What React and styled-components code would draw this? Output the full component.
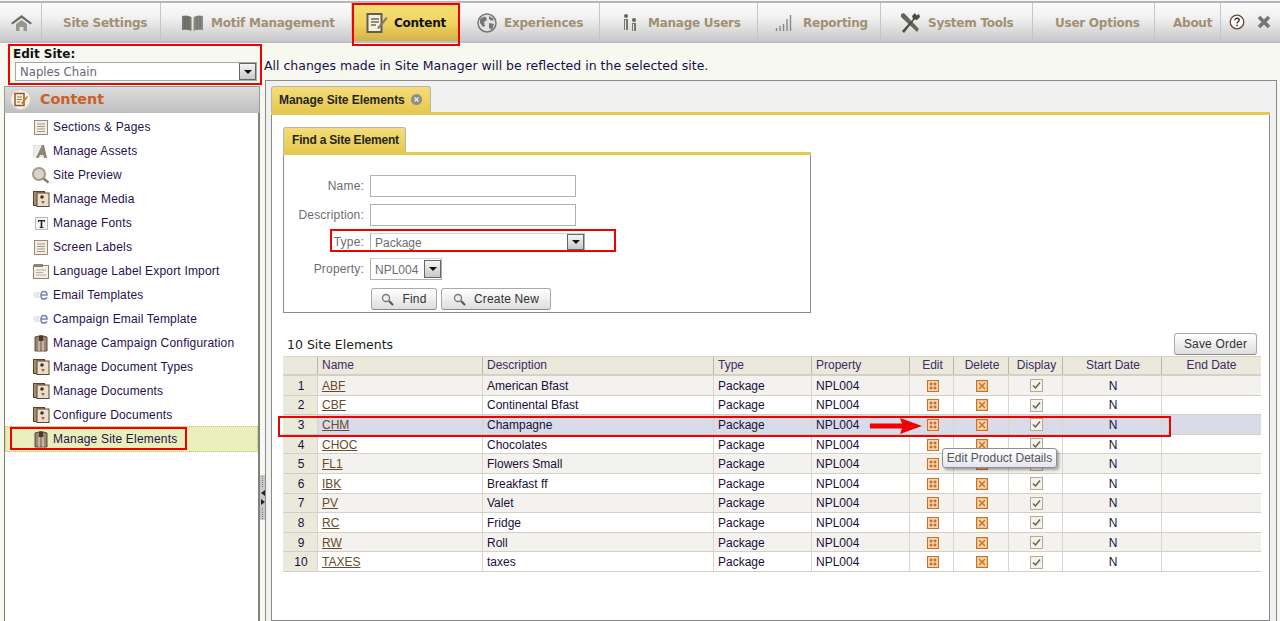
import React from 'react'
import styled, { createGlobalStyle } from 'styled-components'

const GlobalStyle = createGlobalStyle`
  html, body { margin: 0; padding: 0; background: #f7f8f0; }
  body { font-family: "Liberation Sans", Arial, sans-serif; overflow: hidden; }
  * { box-sizing: border-box; }
`

const Page = styled.div`
  position: relative;
  width: 1280px;
  height: 621px;
  overflow: hidden;
  background: #f7f8f0;
  padding-top: 1px;
`

/* ---------- top navigation ---------- */

const NavBar = styled.div`
  display: flex;
  height: 42px;
  border-top: 2px solid #b5b5bb;
  border-bottom: 2px solid #bdbdc9;
  background: linear-gradient(#fbfbfb 0%, #f0f0f0 40%, #c9c9c9 100%);
`
const NavItem = styled.div`
  display: flex;
  align-items: center;
  gap: ${p => p.$gap || 0}px;
  width: ${p => p.$w}px;
  flex: none;
  padding-left: ${p => p.$pad || 0}px;
  padding-top: 1px;
  border-right: ${p => p.$active ? 'none' : '1px solid #c4c4d2'};
  font: bold 12px "DejaVu Sans", Verdana, sans-serif;
  letter-spacing: -0.25px;
  color: ${p => p.$active ? '#111' : '#a09074'};
  background: ${p => p.$active ? 'linear-gradient(#f8e078 0%, #f0d25e 55%, #d2b247 100%)' : 'none'};
`
const NavTools = styled.div`
  display: flex;
  align-items: center;
  gap: 12px;
  padding-left: 8px;
  flex: 1;
`

/* ---------- body layout ---------- */

const Body = styled.div`
  display: flex;
  height: 578px;
`
const Side = styled.div`
  width: 260px;
  flex: none;
  padding: 3px 0 0 4px;
  display: flex;
  flex-direction: column;
`
const SiteLabel = styled.div`
  font: bold 12px "DejaVu Sans", Verdana, sans-serif;
  color: #111;
  padding-left: 9px;
  height: 16px;
  line-height: 16px;
`
const SiteSelect = styled.div`
  display: flex;
  align-items: center;
  justify-content: space-between;
  width: 242px;
  height: 19px;
  margin: 0 0 5px 11px;
  padding: 0 0 0 4px;
  border: 1px solid #a8a8a8;
  background: #fff;
  font: 11.7px "DejaVu Sans", Verdana, sans-serif;
  color: #666677;
`
const SideHead = styled.div`
  display: flex;
  align-items: center;
  gap: 9px;
  height: 27px;
  padding: 0 0 2px 5px;
  border: 1px solid #9a9a9a;
  border-bottom: none;
  background: linear-gradient(#dcdcdc, #bfbfbf);
  font: bold 14.3px "DejaVu Sans", Verdana, sans-serif;
  color: #c8602a;
`
const SideList = styled.div`
  flex: 1;
  border: 1px solid #808080;
  border-width: 0 2px 0 1px;
  background: #fff;
  padding-top: 2px;
`
const SideRow = styled.div`
  display: flex;
  align-items: center;
  height: ${p => p.$active ? 26 : 24}px;
  margin-top: ${p => p.$active ? -1 : 0}px;
  padding-left: 27px;
  gap: 3px;
  font-size: 12px;
  letter-spacing: 0.18px;
  color: #27104e;
  ${p => p.$active && `
    background: #e9efbb;
    outline: 1px dotted #cfc25a;
    outline-offset: -1px;
  `}
`
const IconSlot = styled.span`
  width: 18px;
  height: 18px;
  flex: none;
  display: flex;
  align-items: center;
  justify-content: center;
`
const Splitter = styled.div`
  width: 5px;
  flex: none;
  display: flex;
  flex-direction: column;
  justify-content: flex-end;
  padding-bottom: 101px;
`
const Grip = styled.div`
  height: 45px;
  background: #c9c9c9;
  display: flex;
  flex-direction: column;
  align-items: center;
  justify-content: center;
  gap: 3px;
`
const GripDots = styled.div`
  height: 11px;
  border-left: 1px dotted #808080;
`
const GripArrow = styled.div`
  width: 0;
  height: 0;
  border: 3px solid transparent;
  border-left: ${p => p.$right ? '4px solid #222' : 'none'};
  border-right: ${p => p.$right ? 'none' : '4px solid #222'};
`

/* ---------- right side ---------- */

const Main = styled.div`
  flex: 1;
  display: flex;
  flex-direction: column;
  min-width: 0;
  padding-right: 3px;
`
const Notice = styled.div`
  height: 37px;
  padding: 14px 0 0 0;
  font: 12.5px/17px "DejaVu Sans", Verdana, sans-serif;
  color: #1a0f45;
  margin-left: -1px;
`
const Shell = styled.div`
  flex: 1;
  display: flex;
  flex-direction: column;
  padding: 5px 6px 0 5px;
  background: #f1f1f1;
  border: 1px solid #8a8a8a;
  border-bottom: none;
`
const TabRow = styled.div`
  display: flex;
  border-bottom: 3px solid #e6c94f;
`
const Tab = styled.div`
  display: flex;
  align-items: center;
  gap: 6px;
  height: ${p => p.$h}px;
  padding: 0 ${p => p.$tight ? 6 : 8}px 0 ${p => p.$tight ? 8 : 7}px;
  border: 1px solid #b5b5b5;
  border-bottom: none;
  border-radius: 3px 3px 0 0;
  background: linear-gradient(#f3dd7a, #e6c94f);
  font: bold 12px "Liberation Sans", Arial, sans-serif;
  letter-spacing: ${p => p.$tight ? -0.2 : -0.05}px;
  color: #26261a;
`
const Panel = styled.div`
  flex: 1;
  background: #fff;
  border: 1px solid #8a8a8a;
  border-top: none;
  padding: 12px 0 0 11px;
`
const FindWrap = styled.div`
  width: 528px;
`
const FindBox = styled.div`
  display: flex;
  flex-direction: column;
  gap: 7px;
  height: 158px;
  border: 1px solid #8a8a8a;
  border-top: none;
  padding-top: 20px;
`
const FormRow = styled.div`
  display: grid;
  grid-template-columns: 80px 1fr;
  column-gap: 6px;
  align-items: center;
  height: ${p => p.$h || 22}px;
`
const FormLabel = styled.div`
  text-align: right;
  font-size: 12px;
  letter-spacing: 0.18px;
  color: #6d6d74;
`
const TextInput = styled.div`
  width: 206px;
  height: 22px;
  border: 1px solid #b0b0b0;
  background: #fff;
`
const SelectBox = styled.div`
  display: flex;
  align-items: center;
  justify-content: space-between;
  width: ${p => p.$w}px;
  height: ${p => p.$h || 22}px;
  padding-left: 4px;
  border: 1px solid #b0b0b0;
  border-top-color: #d4d4d4;
  background: #fff;
  font-size: 12px;
  color: #6d6d74;
`
const SelectText = styled.span`
  padding-top: 1px;
`
const Arrow = styled.span`
  width: 17px;
  height: ${p => p.$h || 18}px;
  flex: none;
  border: 1px solid #666;
  background: linear-gradient(#f5f5f5, #c8c8c8);
  display: flex;
  align-items: center;
  justify-content: center;
  &::after {
    content: '';
    border: 4px solid transparent;
    border-top: 4px solid #111;
    border-bottom: none;
  }
`
const FormButtons = styled.div`
  display: flex;
  gap: 4px;
  margin: 1px 0 0 87px;
`
const Button = styled.div`
  display: flex;
  align-items: center;
  justify-content: center;
  gap: ${p => p.$gap || 0}px;
  width: ${p => p.$w}px;
  height: 22px;
  border: 1px solid #a9a9a9;
  border-bottom-color: #8b8b8b;
  border-radius: 3px;
  background: linear-gradient(#ffffff, #dedede);
  font-size: 12px;
  letter-spacing: 0.18px;
  color: #333;
`
const ListHead = styled.div`
  display: flex;
  align-items: flex-end;
  justify-content: space-between;
  width: 978px;
  height: 42px;
  padding: 0 4px;
`
const ListTitle = styled.div`
  font: 12.5px/18px "DejaVu Sans", Verdana, sans-serif;
  color: #222;
  margin-bottom: 1px;
`
const GridRow = styled.div`
  display: grid;
  grid-template-columns: 35px 165px 231px 98px 98px 44px 55px 54px 99px 99px;
  height: ${p => p.$h || 19.6}px;
  width: 978px;
  font-size: 12px;
  border-bottom: 1px solid #d3d0c8;
  background: ${p => p.$selected ? '#d9dce8' : p.$odd ? '#f3f2ee' : '#fff'};
  color: #1a0f3a;
`
const HeadRow = styled(GridRow)`
  background: #ebe9dc;
  border-top: 1px solid #d8d5c8;
  border-bottom: 2px solid #d3d0c8;
  margin-top: 1px;
`
const Cell = styled.div`
  display: flex;
  align-items: center;
  justify-content: ${p => p.$center ? 'center' : 'flex-start'};
  padding: ${p => p.$head ? '0 0 2px' : '1px 0 0'} ${p => p.$center ? 2 : 4}px;
  padding-right: 0;
  border-right: 1px solid ${p => p.$head ? '#b9b7ab' : '#d9d6ce'};
  background: ${p => p.$index ? '#ebe9dc' : 'none'};
  color: ${p => p.$head ? '#3c2b66' : 'inherit'};
  &:last-child { border-right: none; padding-left: 0; }
`
const NameLink = styled.span`
  color: #6a4a2a;
  text-decoration: underline;
`

/* ---------- things that lie over the page ---------- */

const RedBox = styled.div`
  position: absolute;
  left: ${p => p.$x}px;
  top: ${p => p.$y}px;
  width: ${p => p.$w}px;
  height: ${p => p.$h}px;
  border: 2px solid #f00000;
  pointer-events: none;
`
const RedArrow = styled.svg`
  position: absolute;
  left: 870px;
  top: 418px;
`
const Tooltip = styled.div`
  position: absolute;
  left: 942px;
  top: 448px;
  width: 115px;
  height: 20px;
  border: 1px solid #8e8e98;
  border-radius: 3px;
  background: linear-gradient(#ffffff, #e6e6f0);
  box-shadow: 2px 2px 3px rgba(0, 0, 0, 0.35);
  font-size: 12px;
  line-height: 18px;
  text-align: center;
  color: #555;
`

/* ---------- icons ---------- */

const HomeIcon = () => (
  <svg width="21" height="20" viewBox="0 0 21 20">
    <path d="M0 10 10.500 2 21 10l-1.500 1.500-9-6.500-9 6.500Z" fill="#6e6e66" />
    <path d="M5 11l5.500-4 5.500 4v7h-3.500v-4h-4v4H5Z" fill="#96968c" />
  </svg>
)
const BookIcon = () => (
  <svg width="21" height="18" viewBox="0 0 21 18">
    <path d="M0 2q5-1.500 9.500 1v14Q5 15 0 16Z" fill="#77776f" />
    <path d="M21 2q-5-1.500-9.500 1v14q4.500-2 9.500-1Z" fill="#8a8a82" />
    <path d="M3 2v13M6 2.500v13M15 2.500v13M18 2v13" stroke="#5f5f58" strokeWidth="0.800" />
  </svg>
)
const ContentIcon = () => (
  <svg width="22" height="22" viewBox="0 0 22 22">
    <rect x="1.500" y="2" width="14" height="18" fill="#f5f1d8" stroke="#5e5e58" strokeWidth="2" />
    <path d="M5 7h8M5 10h8M5 13h5" stroke="#6b6b62" strokeWidth="1.300" />
    <path d="M11 16 20 5l1.500 1.500L13 17Z" fill="#7a7a70" />
  </svg>
)
const HeadIcon = () => (
  <svg width="21" height="21" viewBox="0 0 21 21">
    <circle cx="10.500" cy="10.500" r="10" fill="#f4f1ea" stroke="#cfcfcf" />
    <rect x="5" y="4.500" width="9" height="12" fill="#fbf3e0" stroke="#8a5a2c" strokeWidth="1.500" />
    <path d="M7 8h5M7 10.500h5M7 13h3" stroke="#a07040" />
    <path d="M11 14l6-7 1 1-5.500 7Z" fill="#d0701c" />
  </svg>
)
const GlobeIcon = () => (
  <svg width="20" height="20" viewBox="0 0 20 20">
    <circle cx="10" cy="10" r="9" fill="#e3e3e3" stroke="#777" strokeWidth="1.500" />
    <path d="M3 6q4-3 6-2l1 3-3 2 1 4-2 1-3-4ZM12 3l5 3-2 2-3-2ZM12 10l5 1-2 6-3-2Z" fill="#777" />
  </svg>
)
const UsersIcon = () => (
  <svg width="16" height="20" viewBox="0 0 16 20">
    <circle cx="4" cy="3" r="2" fill="#66665e" />
    <rect x="2" y="6" width="4" height="11" fill="#77776e" />
    <path d="M3 7h1v10H3Z" fill="#e4e4e0" />
    <circle cx="12" cy="7" r="2" fill="#66665e" />
    <rect x="10" y="10" width="4" height="8" fill="#77776e" />
    <path d="M11 11h1v7h-1Z" fill="#e4e4e0" />
  </svg>
)
const BarsIcon = () => (
  <svg width="19" height="20" viewBox="0 0 19 20">
    <path d="M1.500 15v3M5 13v5M8.500 11v7M12 6v12M15.500 2v16" stroke="#8a8a82" strokeWidth="1.400" />
  </svg>
)
const ToolsIcon = () => (
  <svg width="22" height="22" viewBox="0 0 22 22">
    <path d="M2 2 5 1l15 16-2 3L2 5Z" fill="#66665e" />
    <path d="M3 19 14 7l-1-3 3-3 1.500 2.500L20 2l1 3-3 3-2.500-.5L5 21Z" fill="#4a4a44" />
  </svg>
)
const HelpIcon = () => (
  <svg width="16" height="16" viewBox="0 0 16 16">
    <circle cx="8" cy="8" r="6.800" fill="#fff" stroke="#6b4a2a" strokeWidth="1.300" />
    <path d="M5.800 6.200Q6 4.300 8 4.300q2.200 0 2.200 1.900C10.200 7.800 8 7.800 8 9.500" fill="none" stroke="#333" strokeWidth="1.400" />
    <rect x="7.200" y="10.600" width="1.600" height="1.600" fill="#333" />
  </svg>
)
const CloseIcon = () => (
  <svg width="14" height="14" viewBox="0 0 14 14">
    <path d="M2 2 12 12M12 2 2 12" stroke="#77776f" strokeWidth="3.800" />
  </svg>
)
const TabClose = () => (
  <svg width="11" height="11" viewBox="0 0 11 11">
    <circle cx="5.500" cy="5.500" r="5.500" fill="#8d8d8d" />
    <path d="M3.500 3.500l4 4M7.500 3.500l-4 4" stroke="#eee" strokeWidth="1.300" />
  </svg>
)
const Search = () => (
  <svg width="13" height="13" viewBox="0 0 13 13">
    <circle cx="5" cy="5" r="3.500" fill="#eee" stroke="#777" strokeWidth="1.300" />
    <path d="M8 8l4 4" stroke="#555" strokeWidth="2" />
  </svg>
)
const PageIcon = () => (
  <svg width="14" height="15" viewBox="0 0 14 15">
    <rect x="0.500" y="0.500" width="13" height="14" fill="#f3eee4" stroke="#a08a6e" />
    <path d="M3 4h8M3 6.500h8M3 9h8M3 11.500h8" stroke="#9a9a92" />
  </svg>
)
const AssetIcon = () => (
  <svg width="16" height="14" viewBox="0 0 16 14">
    <rect x="0.500" y="1.500" width="9" height="11" fill="#eeeeea" stroke="#ccc" strokeDasharray="1 1" />
    <path d="M3 14 9 1h2l3 13h-3l-.6-3H7l-1.500 3Z" fill="#8f8572" />
  </svg>
)
const LensIcon = () => (
  <svg width="18" height="17" viewBox="0 0 18 17">
    <circle cx="7" cy="7" r="6" fill="#d9d5cc" stroke="#a39c8e" strokeWidth="2" />
    <path d="M11.500 11.500 16.500 15.500" stroke="#8a7d66" strokeWidth="2.500" />
  </svg>
)
const MediaIcon = () => (
  <svg width="17" height="16" viewBox="0 0 17 16">
    <rect x="0.500" y="0.500" width="11" height="14" fill="#a78d70" stroke="#5e442a" />
    <rect x="4" y="2" width="12" height="13.500" fill="#e8dfd0" stroke="#5e442a" />
    <circle cx="9" cy="6" r="1.800" fill="#4a3018" />
    <path d="M8 10h4l-2 3Z" fill="#b5641e" />
  </svg>
)
const FontIcon = () => (
  <svg width="13" height="13" viewBox="0 0 13 13">
    <rect x="0.500" y="0.500" width="12" height="12" fill="#f6f6f2" stroke="#bbb" />
    <path d="M3 3h7v2H9V4.200H7.300V10H8.300v1H4.700v-1h1V4.200H4V5H3Z" fill="#222" />
  </svg>
)
const WindowIcon = () => (
  <svg width="16" height="16" viewBox="0 0 16 16">
    <rect x="0.500" y="2.500" width="15" height="13" fill="#f1eee6" stroke="#8f8270" />
    <rect x="1" y="1" width="9" height="3" fill="#8f8270" />
    <path d="M3 7h10M3 9.500h7M3 12h10" stroke="#b5b0a4" />
  </svg>
)
const MailIcon = () => (
  <svg width="16" height="10" viewBox="0 0 16 10">
    <path d="M1 3h6M0 5h6M1 7h6" stroke="#cfcfcf" />
    <path d="M8.500 5h5.500Q14 1.500 11 1.500T8 5.500 11 9q2 0 3-1.500" fill="none" stroke="#7488ad" strokeWidth="1.600" />
  </svg>
)
const ShirtIcon = () => (
  <svg width="14" height="17" viewBox="0 0 14 17">
    <path d="M1 2q6-3 12 0v14H1Z" fill="#9a8672" stroke="#5e4a36" />
    <path d="M5 1h4v5H5Z" fill="#4a3828" />
    <path d="M5 6v10M9 6v10" stroke="#e9e3da" />
  </svg>
)
const EditGlyph = () => (
  <svg width="12" height="12" viewBox="0 0 12 12">
    <rect x="0.600" y="0.600" width="10.800" height="10.800" fill="#fdf3e4" stroke="#d0701c" strokeWidth="1.200" />
    <path d="M2.500 2.500h3v3h-3ZM6.500 2.500h3v3h-3ZM2.500 6.500h3v3h-3ZM6.500 6.500h3v3h-3Z" fill="#cf6e1e" />
  </svg>
)
const DeleteGlyph = () => (
  <svg width="12" height="12" viewBox="0 0 12 12">
    <rect x="0.600" y="0.600" width="10.800" height="10.800" fill="#f7d8b4" stroke="#d0701c" strokeWidth="1.200" />
    <path d="M3 3l6 6M9 3 3 9" stroke="#d0701c" strokeWidth="1.500" />
  </svg>
)
const CheckGlyph = () => (
  <svg width="13" height="13" viewBox="0 0 13 13">
    <rect x="0.500" y="0.500" width="12" height="12" fill="#f4f2ec" stroke="#b5a998" />
    <path d="M3 6.500 5.500 9 10 3.500" fill="none" stroke="#6b5f50" strokeWidth="1.500" />
  </svg>
)

const menu = [
  ['Sections & Pages', PageIcon],
  ['Manage Assets', AssetIcon],
  ['Site Preview', LensIcon],
  ['Manage Media', MediaIcon],
  ['Manage Fonts', FontIcon],
  ['Screen Labels', PageIcon],
  ['Language Label Export Import', WindowIcon],
  ['Email Templates', MailIcon],
  ['Campaign Email Template', MailIcon],
  ['Manage Campaign Configuration', ShirtIcon],
  ['Manage Document Types', MediaIcon],
  ['Manage Documents', MediaIcon],
  ['Configure Documents', MediaIcon],
  ['Manage Site Elements', ShirtIcon],
]

const rows = [
  ['ABF', 'American Bfast'],
  ['CBF', 'Continental Bfast'],
  ['CHM', 'Champagne'],
  ['CHOC', 'Chocolates'],
  ['FL1', 'Flowers Small'],
  ['IBK', 'Breakfast ff'],
  ['PV', 'Valet'],
  ['RC', 'Fridge'],
  ['RW', 'Roll'],
  ['TAXES', 'taxes'],
]

const heads = ['', 'Name', 'Description', 'Type', 'Property', 'Edit', 'Delete', 'Display', 'Start Date', 'End Date']

export default function App() {
  return (
    <Page>
      <GlobalStyle />
      <NavBar>
        <NavItem $w={42} $pad={11}><HomeIcon /></NavItem>
        <NavItem $w={119} $pad={21}>Site Settings</NavItem>
        <NavItem $w={191} $pad={21} $gap={8}><BookIcon />Motif Management</NavItem>
        <NavItem $w={108} $pad={14} $gap={6} $active><ContentIcon />Content</NavItem>
        <NavItem $w={140} $pad={17} $gap={7}><GlobeIcon />Experiences</NavItem>
        <NavItem $w={158} $pad={22} $gap={10}><UsersIcon />Manage Users</NavItem>
        <NavItem $w={123} $pad={17} $gap={9}><BarsIcon />Reporting</NavItem>
        <NavItem $w={152} $pad={18} $gap={7}><ToolsIcon />System Tools</NavItem>
        <NavItem $w={122} $pad={22}>User Options</NavItem>
        <NavItem $w={66} $pad={18}>About</NavItem>
        <NavTools><HelpIcon /><CloseIcon /></NavTools>
      </NavBar>
      <Body>
        <Side>
          <SiteLabel>Edit Site:</SiteLabel>
          <SiteSelect>Naples Chain<Arrow $h={17} /></SiteSelect>
          <SideHead><HeadIcon />Content</SideHead>
          <SideList>
            {menu.map(([label, Icon], i) => (
              <SideRow key={label} $active={i === menu.length - 1}>
                <IconSlot><Icon /></IconSlot>
                {label}
              </SideRow>
            ))}
          </SideList>
        </Side>
        <Splitter>
          <Grip>
            <GripDots />
            <GripArrow />
            <GripArrow $right />
            <GripDots />
          </Grip>
        </Splitter>
        <Main>
          <Notice>All changes made in Site Manager will be reflected in the selected site.</Notice>
          <Shell>
            <TabRow>
              <Tab $h={26}>Manage Site Elements<TabClose /></Tab>
            </TabRow>
            <Panel>
              <FindWrap>
                <TabRow>
                  <Tab $h={25} $tight>Find a Site Element</Tab>
                </TabRow>
                <FindBox>
                  <FormRow><FormLabel>Name:</FormLabel><TextInput /></FormRow>
                  <FormRow><FormLabel>Description:</FormLabel><TextInput /></FormRow>
                  <FormRow $h={18}>
                    <FormLabel>Type:</FormLabel>
                    <SelectBox $w={215} $h={18}><SelectText>Package</SelectText><Arrow $h={16} /></SelectBox>
                  </FormRow>
                  <FormRow>
                    <FormLabel>Property:</FormLabel>
                    <SelectBox $w={72}><SelectText>NPL004</SelectText><Arrow /></SelectBox>
                  </FormRow>
                  <FormButtons>
                    <Button $w={66} $gap={8}><Search />Find</Button>
                    <Button $w={110} $gap={8}><Search />Create New</Button>
                  </FormButtons>
                </FindBox>
              </FindWrap>
              <ListHead>
                <ListTitle>10 Site Elements</ListTitle>
                <Button $w={83}>Save Order</Button>
              </ListHead>
              <HeadRow $h={20}>
                {heads.map((h, i) => (
                  <Cell key={i} $head $center={i > 4}>{h}</Cell>
                ))}
              </HeadRow>
              {rows.map(([code, desc], i) => (
                <GridRow key={code} $odd={i % 2 === 0} $selected={i === 2}>
                  <Cell $center $index>{i + 1}</Cell>
                  <Cell><NameLink>{code}</NameLink></Cell>
                  <Cell>{desc}</Cell>
                  <Cell>Package</Cell>
                  <Cell>NPL004</Cell>
                  <Cell $center><EditGlyph /></Cell>
                  <Cell $center><DeleteGlyph /></Cell>
                  <Cell $center><CheckGlyph /></Cell>
                  <Cell $center>N</Cell>
                  <Cell />
                </GridRow>
              ))}
            </Panel>
          </Shell>
        </Main>
      </Body>

      <RedBox $x={352} $y={3} $w={108} $h={43} />
      <RedBox $x={8} $y={44} $w={254} $h={41} />
      <RedBox $x={330} $y={229} $w={286} $h={23} />
      <RedBox $x={10} $y={427} $w={177} $h={23} />
      <RedBox $x={278} $y={416} $w={893} $h={21} />
      <RedArrow width="52" height="16" viewBox="0 0 52 16">
        <path d="M0 5.500h32L30 0l22 8-22 8 2-5.500H0Z" fill="#f00000" />
      </RedArrow>
      <Tooltip>Edit Product Details</Tooltip>
    </Page>
  )
}
